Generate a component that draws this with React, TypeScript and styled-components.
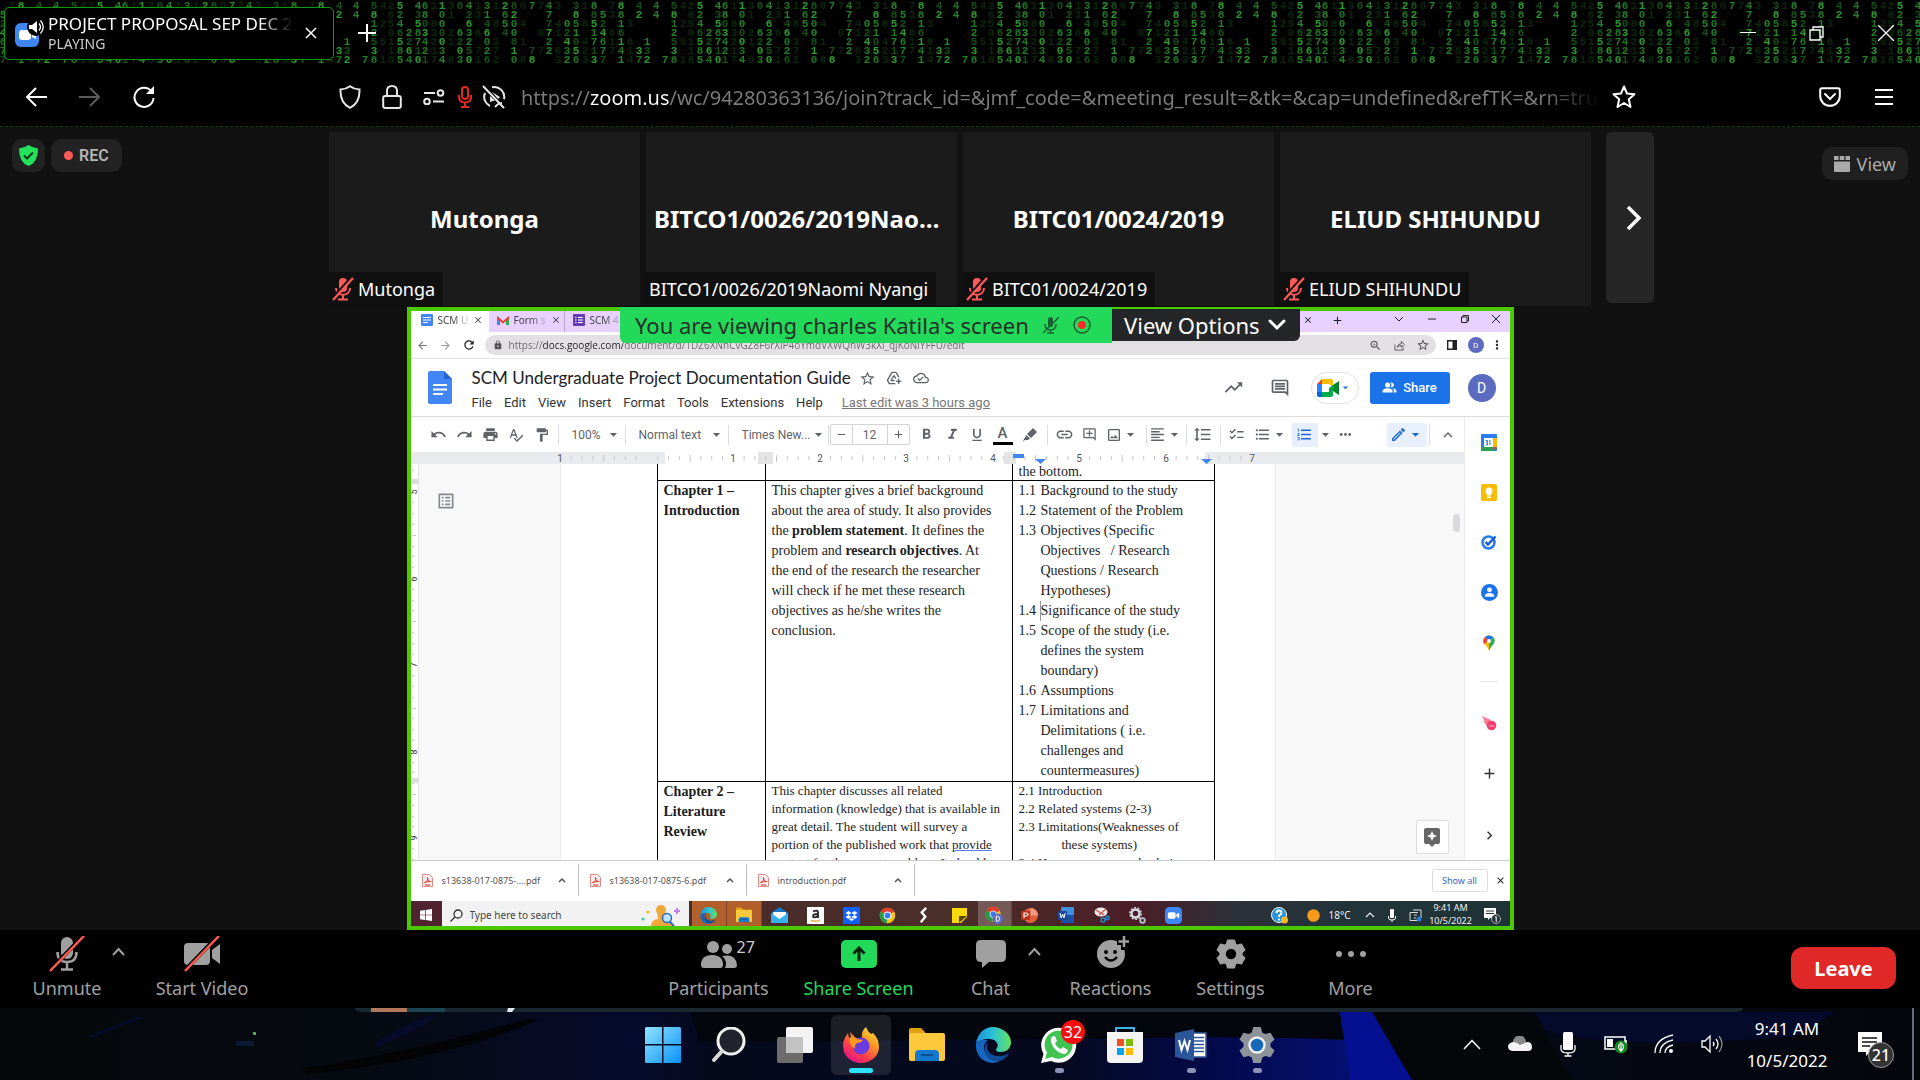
import React from "react";
import styled, { createGlobalStyle, css } from "styled-components";
import {
  MdUndo, MdRedo, MdPrint, MdSpellcheck, MdFormatPaint, MdFormatBold, MdFormatItalic,
  MdFormatUnderlined, MdInsertLink, MdOutlineAddComment,
  MdOutlineImage, MdFormatAlignLeft, MdFormatLineSpacing, MdChecklist,
  MdFormatListBulleted, MdFormatListNumbered, MdMoreHoriz, MdOutlineEdit,
  MdKeyboardArrowUp, MdArrowDropDown, MdTrendingUp, MdOutlineInsertComment,
  MdStarBorder, MdAddToDrive, MdOutlineCloudDone, MdPeopleAlt, MdZoomIn, MdLock,
  MdRefresh, MdArrowBack, MdArrowForward, MdClose, MdAdd, MdRemove, MdMoreVert,
  MdChevronRight, MdOutlineListAlt,
} from "react-icons/md";

const ui = `"Noto Sans", "Open Sans", sans-serif`;
const roboto = `Roboto, "Open Sans", sans-serif`;
const serif = `"Liberation Serif", "Times New Roman", serif`;

const GlobalStyle = createGlobalStyle`
  * { box-sizing: border-box; }
  html, body { margin: 0; background: #000; }
  button, input, select { font: inherit; color: inherit; }
  button { border: 0; background: none; padding: 0; margin: 0; cursor: pointer; }
  svg { display: block; flex: none; }
`;

const Desktop = styled.div`
  min-height: 100vh;
  display: flex;
  flex-direction: column;
  font-family: ${ui};
  color: #fff;
  overflow: hidden;
`;

/* ---------- Firefox chrome ---------- */

const TabStrip = styled.header`
  display: flex;
  align-items: center;
  height: 66px;
  padding-left: 4px;
  background: #000;
  position: relative;
  isolation: isolate;
`;
const RainCanvas = styled.svg`
  position: absolute;
  inset: 0;
  width: 100%;
  height: 100%;
  z-index: -1;
`;
const BrowserTab = styled.div`
  display: flex;
  align-items: center;
  width: 330px;
  height: 53px;
  padding: 0 8px 0 10px;
  gap: 4px;
  background: #000;
  border: 1px solid #0d9a0d;
  border-radius: 5px;
`;
const TabText = styled.div`
  flex: 1;
  min-width: 0;
  overflow: hidden;
  white-space: nowrap;
  mask-image: linear-gradient(90deg, #000 86%, transparent);
`;
const TabTitle = styled.div`
  font-size: 17px;
  line-height: 22px;
`;
const TabState = styled.div`
  font-size: 14px;
  line-height: 18px;
  color: #ccc;
`;
const IconButton = styled.button<{ $w?: number; $h?: number; $c?: string }>`
  display: flex;
  flex: none;
  align-items: center;
  justify-content: center;
  width: ${(p) => p.$w ?? 32}px;
  height: ${(p) => p.$h ?? 32}px;
  color: ${(p) => p.$c ?? "inherit"};
`;
const Grow = styled.div`
  flex: 1;
`;
const NavBar = styled.nav`
  display: flex;
  align-items: center;
  height: 61px;
  padding: 2px 9px 0;
  background: #000;
  border-bottom: 1px dashed #0a3d0a;
`;
const AddressField = styled.div`
  display: flex;
  flex: 1;
  align-items: center;
  min-width: 0;
  margin: 0 158px;
`;
const AddressInput = styled.input<{ $paint: string; $size: number }>`
  flex: 1;
  min-width: 0;
  border: 0;
  outline: 0;
  padding: 0;
  font-size: ${(p) => p.$size}px;
  color: transparent;
  background: ${(p) => p.$paint};
  background-clip: text;
  -webkit-background-clip: text;
`;
const AddressSlot = styled.div`
  display: flex;
  flex: 1;
  min-width: 0;
  padding: 0 3px 0 8px;
`;

/* ---------- Zoom meeting ---------- */

const Stage = styled.main`
  display: flex;
  flex-direction: column;
  flex: 1;
  align-items: center;
  gap: 1px;
  padding-top: 5px;
  background: #111;
`;
const TopRow = styled.div`
  display: grid;
  grid-template-columns: 1fr auto 1fr;
  width: 100%;
`;
const Badges = styled.div`
  display: flex;
  gap: 6px;
  padding: 7px 12px;
`;
const Badge = styled.div`
  display: flex;
  align-items: center;
  gap: 6px;
  height: 33px;
  padding: 0 7px;
  border-radius: 10px;
  background: #222;
`;
const RecBadge = styled(Badge)`
  padding: 0 13px;
  color: #b4b4b4;
  font: 600 16px ${roboto};
`;
const RecDot = styled.span`
  width: 9px;
  height: 9px;
  border-radius: 50%;
  background: #ff5a5a;
`;
const Tiles = styled.div`
  display: flex;
  gap: 6px;
`;
const Tile = styled.article`
  display: flex;
  flex-direction: column;
  align-items: flex-start;
  width: 311px;
  height: 174px;
  background: #1b1b1b;
`;
const TileName = styled.h2`
  width: 100%;
  height: 140px;
  margin: 0;
  padding: 70px 8px 0;
  text-align: center;
  font-size: 24px;
  line-height: 34px;
  font-weight: 700;
  overflow: hidden;
  white-space: nowrap;
  text-overflow: ellipsis;
`;
const TileLabel = styled.div`
  display: flex;
  align-items: center;
  gap: 4px;
  height: 34px;
  padding: 0 8px 0 3px;
  font-size: 18px;
  background: #101010;
`;
const StripSide = styled.div`
  display: flex;
  align-items: flex-start;
  justify-content: space-between;
  padding: 0 12px 0 15px;
`;
const NextButton = styled.button`
  display: flex;
  align-items: center;
  justify-content: center;
  width: 48px;
  height: 171px;
  padding-left: 8px;
  border-radius: 6px;
  background: #262626;
`;
const ViewButton = styled.button`
  display: flex;
  align-items: center;
  gap: 7px;
  height: 33px;
  margin-top: 15px;
  padding: 0 12px;
  border-radius: 10px;
  background: #202020;
  color: #aaa;
  font-size: 18px;
`;
const SharedScreen = styled.section`
  position: relative;
  display: flex;
  flex-direction: column;
  width: 1107px;
  height: 623px;
  border: 4px solid #4cc800;
  background: #fff;
  color: #222;
`;
const Banner = styled.div`
  position: absolute;
  z-index: 2;
  top: -4px;
  left: 50%;
  transform: translateX(-50%);
  display: flex;
  align-items: center;
  font-size: 22px;
  white-space: nowrap;
`;
const BannerInfo = styled.div`
  display: flex;
  align-items: center;
  gap: 13px;
  width: 492px;
  height: 36px;
  padding-left: 15px;
  border-bottom-left-radius: 6px;
  background: #23d959;
  color: #22302a;
`;
const BannerButton = styled.button`
  display: flex;
  align-items: center;
  gap: 8px;
  width: 188px;
  height: 32px;
  padding-left: 12px;
  border-bottom-right-radius: 6px;
  background: #242628;
  color: #fff;
`;
const MeetingBar = styled.footer`
  display: flex;
  align-items: center;
  justify-content: space-between;
  height: 78px;
  padding: 0 24px 2px 0;
  background: #000;
`;
const Group = styled.div`
  display: flex;
`;
const MeetingItem = styled.div<{ $w: number; $c?: string }>`
  position: relative;
  width: ${(p) => p.$w}px;
  color: ${(p) => p.$c ?? "#a0a0a0"};
`;
const MeetingButton = styled.button`
  display: flex;
  flex-direction: column;
  align-items: center;
  gap: 3px;
  width: 100%;
  font-size: 18px;
  line-height: 26px;
`;
const MeetingCaret = styled.button`
  position: absolute;
  top: 6px;
  right: 6px;
  width: 20px;
  height: 20px;
  display: grid;
  place-items: center;
`;
const Count = styled.span`
  position: absolute;
  top: 0;
  left: 86px;
  font-size: 16px;
  line-height: 22px;
  color: #ccc;
`;
const Leave = styled.button`
  width: 105px;
  height: 42px;
  border-radius: 12px;
  background: #e02828;
  font-size: 20px;
  font-weight: 700;
`;

/* ---------- Shared Chrome window ---------- */

const ChromeTabs = styled.div`
  display: flex;
  height: 21px;
  background: #e8d1ff;
  font: 10px ${ui};
`;
const ChromeTab = styled.div<{ $active?: boolean; $w: number }>`
  display: flex;
  align-items: center;
  gap: 5px;
  width: ${(p) => p.$w}px;
  padding: 0 6px 4px ${(p) => (p.$active ? 10 : 8)}px;
  color: #444;
  border-right: 1px solid ${(p) => (p.$active ? "#fff" : "#b9a6cf")};
  background: ${(p) => (p.$active ? "#fff" : "transparent")};
`;
const ChromeTabTitle = styled.span`
  flex: 1;
  white-space: nowrap;
  mask-image: linear-gradient(90deg, #000 50%, rgba(0, 0, 0, 0.2));
`;
const ChromeBar = styled.div`
  display: flex;
  align-items: center;
  height: 27px;
  border-bottom: 1px solid #e4e4e4;
  font: 10px "Open Sans", ${ui};
`;
const Omnibox = styled.div`
  display: flex;
  flex: 1;
  align-items: center;
  gap: 3px;
  height: 20px;
  margin: 0 4px 0 4px;
  padding: 0 1px 0 5px;
  border-radius: 10px;
  background: #e2e0e3;
`;
const OmniActions = styled.div`
  display: flex;
`;
const Avatar = styled.button<{ $s: number }>`
  flex: none;
  width: ${(p) => p.$s}px;
  height: ${(p) => p.$s}px;
  border-radius: 50%;
  background: #5c6bc0;
  color: #fff;
  font-family: ${roboto};
  font-size: ${(p) => p.$s / 2}px;
`;
const DocsHeader = styled.div`
  display: flex;
  align-items: center;
  height: 58px;
  padding: 0 14px 0 17px;
  border-bottom: 1px solid #dcdcdc;
  font-family: ${roboto};
`;
const DocsTitleBlock = styled.div`
  display: flex;
  flex: 1;
  flex-direction: column;
  padding: 7px 0 0 20px;
  height: 100%;
`;
const TitleRow = styled.div`
  display: flex;
  align-items: center;
  height: 24px;
  color: #5f6368;
`;
const DocTitle = styled.h1`
  margin: 0 3px 0 0;
  color: #202124;
  font: 400 17px/24px Lato, ${roboto};
`;
const MenuRow = styled.div`
  display: flex;
  height: 24px;
  align-items: center;
  gap: 12px;
  font-size: 13px;
  color: #333;
`;
const LastEdit = styled.a`
  margin-left: 7px;
  color: #777;
`;
const MeetPill = styled.button`
  display: flex;
  align-items: center;
  justify-content: center;
  width: 48px;
  height: 32px;
  margin: 0 11px 0 8px;
  border: 1px solid #e2e2e2;
  border-radius: 16px;
  color: #1a73e8;
`;
const ShareButton = styled.button`
  display: flex;
  align-items: center;
  justify-content: center;
  gap: 6px;
  width: 80px;
  height: 32px;
  margin-right: 18px;
  border-radius: 3px;
  background: #1a73e8;
  color: #fff;
  font-size: 13px;
  font-weight: 500;
`;
const DocsMain = styled.div`
  display: flex;
  flex: 1;
  min-height: 0;
`;
const Editor = styled.div`
  display: flex;
  flex: 1;
  flex-direction: column;
  min-width: 0;
`;
const Toolbar = styled.div`
  display: flex;
  align-items: center;
  height: 35px;
  padding-left: 15px;
  color: #5f6368;
  font: 12px ${roboto};
`;
const Sep = styled.span<{ $m?: number }>`
  flex: none;
  width: 1px;
  height: 20px;
  margin: 0 ${(p) => p.$m ?? 4}px;
  background: #dadce0;
`;
const Gap = styled.span<{ $w: number }>`
  flex: none;
  width: ${(p) => p.$w}px;
`;
const PanelRule = styled.hr`
  width: 18px;
  height: 1px;
  margin: 12px 0 16px;
  border: 0;
  background: #e8e8e8;
`;
const Picker = styled.label<{ $w: number }>`
  display: flex;
  align-items: center;
  width: ${(p) => p.$w}px;
  padding-left: 10px;
  select {
    flex: 1;
    min-width: 0;
    appearance: none;
    border: 0;
    padding: 0;
    background: none;
    outline: 0;
  }
`;
const SizeBox = styled.div`
  display: flex;
  height: 21px;
  width: 80px;
  margin-right: 4px;
  border: 1px solid #d4d4d4;
  border-radius: 2px;
  input {
    width: 36px;
    border: solid #d4d4d4;
    border-width: 0 1px;
    padding: 0;
    text-align: center;
  }
`;
const Lit = styled.div<{ $w: number }>`
  display: flex;
  align-items: center;
  justify-content: center;
  width: ${(p) => p.$w}px;
  height: 24px;
  border-radius: 2px;
  background: #e8f0fe;
  color: #1a67d2;
`;
const InkButton = styled(IconButton)`
  border-bottom: 3px solid #000;
  width: 20px;
  height: 20px;
  margin: 0 3px;
  font-weight: 500;
  font-size: 15px;
`;
const Sheet = styled.div`
  display: flex;
  flex: 1;
  min-height: 0;
  overflow: hidden;
  background: #f8f8f9;
`;
const Outline = styled.div`
  flex: none;
  width: 141px;
  padding: 27px 0 0 17px;
  color: #85888d;
`;
const Page = styled.div`
  flex: none;
  width: 716px;
  padding-left: 96px;
  background: #fff;
  border: solid #ececec;
  border-width: 0 1px;
`;
const Margin = styled.div`
  display: flex;
  flex: 1;
  flex-direction: column;
  align-items: flex-end;
  justify-content: space-between;
  padding: 50px 4px 6px 0;
`;
const Thumb = styled.div`
  width: 7px;
  height: 18px;
  border-radius: 4px;
  background: #dadade;
`;
const Explore = styled.button`
  display: grid;
  place-items: center;
  width: 33px;
  height: 34px;
  margin-right: 11px;
  border: 1px solid #ddd;
  border-radius: 2px;
  background: #fff;
`;
const Chapters = styled.table`
  width: 558px;
  table-layout: fixed;
  border-collapse: collapse;
  font: 14px/20px ${serif};
  color: #1c1c1c;
  td, th {
    padding: 0 0 0 6px;
    border: 1px solid #000;
    text-align: left;
    vertical-align: top;
    white-space: nowrap;
  }
  tr:first-child td {
    border-top: 0;
  }
`;
const TopLine = styled.div`
  line-height: 16px;
`;
const Compact = styled.div`
  font-size: 13px;
  line-height: 18px;
`;
const Entry = styled.div`
  display: grid;
  grid-template-columns: 22px 1fr;
  white-space: pre;
`;
const Hang = styled.div`
  padding-left: 43px;
`;
const Typo = styled.span`
  text-decoration: underline;
  text-decoration-color: #4a86e8;
`;
const Caret = styled.span`
  box-shadow: -1px 0 0 #999;
`;
const SidePanel = styled.aside`
  display: flex;
  flex-direction: column;
  align-items: center;
  width: 46px;
  padding: 0 0 9px 4px;
  border-left: 1px solid #ececec;
`;
const SideItem = styled.button<{ $h?: number }>`
  display: grid;
  place-items: center;
  width: 34px;
  height: ${(p) => p.$h ?? 50}px;
  color: #333;
`;
const Downloads = styled.div`
  display: flex;
  align-items: center;
  height: 41px;
  padding-bottom: 2px;
  border-top: 1px solid #ccc;
  font: 9px ${ui};
  color: #555;
`;
const DownloadItem = styled.div`
  display: flex;
  align-items: center;
  gap: 9px;
  width: 168px;
  height: 32px;
  padding: 0 8px 0 11px;
  border-right: 1px solid #bbb;
`;
const FileLink = styled.a`
  flex: 1;
  color: inherit;
  text-decoration: none;
  white-space: nowrap;
`;
const ShowAll = styled.button`
  width: 56px;
  height: 23px;
  margin-right: 4px;
  border: 1px solid #ddd;
  border-radius: 2px;
  color: #3367c9;
`;
const RemoteTaskbar = styled.div`
  display: flex;
  align-items: center;
  height: 25px;
  overflow: hidden;
  background: linear-gradient(90deg, #50222f 0, #4a2c2a 25%, #4a2e29 50%, #4b1d27 66%, #2c3038 75%, #22343a 85%, #1f3337);
  color: #f2f2f2;
  font: 10px ${ui};
`;
const RemoteSearch = styled.label`
  display: flex;
  align-items: center;
  gap: 7px;
  width: 247px;
  height: 25px;
  padding: 3px 8px 0 8px;
  background: #f2f2f2;
  color: #333;
  input {
    flex: 1;
    min-width: 0;
    border: 0;
    background: none;
    outline: 0;
    padding: 0;
  }
  input::placeholder { color: #444; }
`;
const RemoteApp = styled.button<{ $bg?: string; $w?: number }>`
  display: grid;
  place-items: center;
  width: ${(p) => p.$w ?? 36}px;
  height: 25px;
  padding-top: 3px;
  ${(p) => p.$bg && css`background: ${p.$bg}; border-right: 1px solid #7d4020;`}
`;
const Temperature = styled.span`
  width: 32px;
  padding-top: 3px;
`;
const RemoteClock = styled.div`
  width: 50px;
  text-align: center;
  font-size: 9px;
  line-height: 13px;
`;

/* ---------- Windows taskbar ---------- */

const Taskbar = styled.div`
  display: grid;
  grid-template-columns: 1fr auto 1fr;
  align-items: center;
  position: relative;
  isolation: isolate;
  height: 72px;
  background: #04070c;
`;
const Wallpaper = styled.svg`
  position: absolute;
  inset: 0;
  width: 100%;
  height: 100%;
  z-index: -1;
`;
const Apps = styled.div`
  display: flex;
  padding-top: 2px;
`;
const App_ = styled.button<{ $active?: boolean }>`
  display: flex;
  flex-direction: column;
  align-items: center;
  justify-content: space-between;
  position: relative;
  width: 60px;
  height: 60px;
  margin: 0 3px;
  padding: 12px 0 2px;
  border-radius: 6px;
  background: ${(p) => (p.$active ? "rgba(255,255,255,0.1)" : "none")};
`;
const Running = styled.span<{ $on?: boolean; $active?: boolean }>`
  width: ${(p) => (p.$active ? 24 : 9)}px;
  height: 5px;
  border-radius: 3px;
  background: ${(p) => (p.$active ? "#2ee3ff" : p.$on ? "#8d93b4" : "transparent")};
`;
const Unread = styled.span`
  position: absolute;
  top: 5px;
  right: 4px;
  width: 24px;
  height: 24px;
  border-radius: 50%;
  background: #f70d0d;
  font-size: 16px;
  line-height: 24px;
`;
const Tray = styled.div`
  display: flex;
  align-items: center;
  justify-content: flex-end;
  height: 100%;
`;
const Clock = styled.div`
  width: 102px;
  padding-top: 2px;
  text-align: center;
  font-size: 17px;
  line-height: 32px;
`;
const Notice = styled.button`
  position: relative;
  display: grid;
  place-items: center;
  width: 64px;
  height: 48px;
`;
const NoticeCount = styled.span`
  position: absolute;
  left: 30px;
  top: 22px;
  width: 26px;
  height: 26px;
  border: 1px solid #999;
  border-radius: 50%;
  background: #333;
  font-size: 16px;
  line-height: 24px;
  font-weight: 500;
`;
const PeekLine = styled.span`
  align-self: stretch;
  width: 2px;
  margin: 0 6px 0 10px;
  background: #666c78;
`;

/* ---------- Drawings ---------- */

const rain: [number, string][] = [
  [20, "5246585"], [29, "   2264"], [38, "4358710"], [45, "6803421"], [62, "1000034"],
  [80, "0  6203"], [89, "4263250"], [107, "3146026"], [125, "2654   "], [134, "8200810"],
  [152, "7    78"], [169, "477722 "], [187, "  02432"], [196, "3851056"], [214, "8851713"],
  [223, " 524677"], [241, "8816141"], [259, "42   37"], [267, "    132"], [276, "44     "],
  [285, "      7"], [294, "5812538"],
];
const faint: [number, string][] = [
  [11, "2650118"], [54, "1 83217"], [71, "31 21 8"], [98, "13 6 71"], [116, "1 8 372"],
  [143, "0 4 1 8"], [161, "7  0 7 "], [178, "3 41 63"], [205, "1 8 423"], [232, "73 817 "],
  [250, "  3 614"], [3, "4 2 5 1"],
];
const shades = ["#2c9a2e", "#1c7522", "#237f28", "#154f18"];
const Rain = () => (
  <RainCanvas aria-hidden="true">
    <defs>
      <pattern id="rain" x="80" width="300" height="66" patternUnits="userSpaceOnUse">
        <g fontFamily="Liberation Mono, monospace" fontSize="11" fontWeight="700" textAnchor="middle">
          {rain.map(([x, s], i) =>
            s.split("").map((c, r) => (
              <text key={`${x}-${r}`} x={x} y={9 + r * 9} fill={shades[(i * 3 + r * 5) % 4]}>{c}</text>
            )),
          )}
          {faint.map(([x, s]) =>
            s.split("").map((c, r) => (
              <text key={`${x}-${r}`} x={x} y={9 + r * 9} fill="#0a260b">{c}</text>
            )),
          )}
        </g>
      </pattern>
    </defs>
    <rect width="100%" height="66" fill="url(#rain)" />
  </RainCanvas>
);

type P = { children: React.ReactNode; s?: number; w?: number; h?: number; box?: string; fill?: string; stroke?: string; sw?: number };
const Svg = ({ children, s = 24, w, h, box = "0 0 24 24", fill = "none", stroke, sw }: P) => (
  <svg width={w ?? s} height={h ?? s} viewBox={box} fill={fill} stroke={stroke} strokeWidth={sw} aria-hidden="true">
    {children}
  </svg>
);
const Line = (p: P) => <Svg stroke="currentColor" sw={2} {...p} />;

const MutedMic = () => (
  <Svg w={22} h={24} box="0 0 22 24">
    <rect x="7" y="1" width="8" height="14" rx="4" fill="#ff5a5a" />
    <path d="M4 11c0 9 14 9 14 0M11 18v4M6 22.500h10" stroke="#ff5a5a" strokeWidth="2" />
    <path d="M0 22L20 0" stroke="#101010" strokeWidth="3" />
    <path d="M1 23L21 1" stroke="#ff5a5a" strokeWidth="2.200" />
  </Svg>
);
const ZoomLogo = ({ s = 24 }: { s?: number }) => (
  <Svg s={s}>
    <rect width="24" height="24" rx="6" fill="#3f86f5" />
    <rect x="4" y="7.500" width="11" height="9" rx="2.500" fill="#fff" />
    <path d="M16 10.500l4-2.500v8l-4-2.500z" fill="#fff" />
  </Svg>
);
const ChromeLogo = ({ s = 16 }: { s?: number }) => (
  <Svg s={s}>
    <circle cx="12" cy="12" r="11" fill="#fbc116" />
    <path d="M12 12L2.500 6.500A11 11 0 0121.500 6.500z" fill="#e33b2e" />
    <path d="M12 12L2.500 6.500A11 11 0 0011 23z" fill="#229a48" />
    <circle cx="12" cy="12" r="5.500" fill="#fff" />
    <circle cx="12" cy="12" r="4.200" fill="#3b7ded" />
  </Svg>
);
const EdgeLogo = ({ s = 36 }: { s?: number }) => (
  <Svg s={s} box="0 0 36 36">
    <defs>
      <linearGradient id={`edge${s}`} x1="0" x2="1"><stop stopColor="#1d8fe0" /><stop offset=".5" stopColor="#2cc3d6" /><stop offset="1" stopColor="#63e05a" /></linearGradient>
    </defs>
    <path d="M1 17C2 7 9 0 18 0s18 7 18 15c0 6-4 10-10 10-5 0-6-2-4-4 2-3 0-9-8-9C8 12 3 14 1 17z" fill={`url(#edge${s})`} />
    <path d="M1 17c3-4 8-5 12-4-4 3-5 7-3 12 2 6 9 10 16 8-3 2-6 3-9 3C7 35 0 27 1 17z" fill="#1767c0" />
    <path d="M13 15c-3 5 0 15 12 14 4 0 7-2 9-3-2 5-8 9-14 8-11-2-13-14-7-19z" fill="#0f4c97" />
  </Svg>
);
const WordLogo = ({ w = 36, h = 38 }: { w?: number; h?: number }) => (
  <Svg w={w} h={h} box="0 0 32 32">
    <path d="M17 4h14v24H17z" fill="#fff" stroke="#2b579a" strokeWidth="1.500" />
    <path d="M19 8.500h10M19 12h10M19 15.500h10M19 19h10M19 22.500h10" stroke="#2b579a" strokeWidth="1.600" />
    <path d="M0 4l19-4v32L0 28z" fill="#2b579a" />
    <path d="M4 11l2.500 10L9.500 12l3 9L15 11" stroke="#fff" strokeWidth="2" />
  </Svg>
);
const Folder = ({ s = 36 }: { s?: number }) => (
  <Svg s={s} box="0 0 36 36">
    <path d="M0 3q0-2 2-2h10l4 4v6H0z" fill="#e0a010" />
    <rect y="6" width="36" height="28" rx="2" fill="#fdc93c" />
    <path d="M6 34V27q0-4 4-4h16q4 0 4 4v7z" fill="#1379d0" />
    <path d="M12 28h12" stroke="#0a4f94" strokeWidth="2" />
  </Svg>
);
const Gear = ({ s, c, inner }: { s: number; c: string; inner: React.ReactNode }) => (
  <Svg s={s}>
    <path fill={c} fillRule="evenodd" d="M9.500 0h5l1 3.600 2 1.100L21 3.800l2.700 4.500-2.700 2.600v2.200l2.700 2.600L21 20.200l-3.500-.9-2 1.100-1 3.600h-5l-1-3.600-2-1.100-3.500.9L.3 15.700 3 13.100v-2.200L.3 8.300 3 3.800l3.500.9 2-1.100zM12 7.500a4.500 4.500 0 100 9 4.500 4.500 0 000-9z" />
    {inner}
  </Svg>
);
const Pdf = () => (
  <Svg w={11} h={13} box="0 0 11 13">
    <path d="M.5.500h7l3 3v9H.5z" fill="#fdeceb" stroke="#e08a86" />
    <path d="M2.500 8.500c3-1 3.500-3 3-5 0 3 1.500 4 3.500 4-2.500 0-4 .3-6.500 1z" stroke="#d33a2f" />
    <path d="M3 11h5" stroke="#b33" />
  </Svg>
);
const Down = () => <MdArrowDropDown size={17} />;

const ticks = Array.from({ length: 64 }, (_, i) => i);
const HRuler = () => (
  <svg width="100%" height="12" aria-hidden="true">
    <rect width="100%" height="12" fill="#e9eaee" />
    <rect x="254" width="540" height="12" fill="#fff" />
    <rect x="347" width="15" height="12" fill="#e4e4e4" />
    <rect x="593" width="12" height="12" fill="#e4e4e4" />
    {ticks.map((i) => {
      const x = 149 + i * 10.8;
      return i % 8 === 0 || x > 860 ? null : <rect key={i} x={x} y={i % 4 === 0 ? 3 : 4} width="1" height={i % 4 === 0 ? 7 : 4} fill="#c4c6ca" />;
    })}
    <g fontFamily="Roboto, sans-serif" fontSize="10" fill="#555" textAnchor="middle">
      {["1", "", "1", "2", "3", "4", "5", "6", "7"].map((n, i) => (
        <text key={i} x={149 + Math.round(i * 86.5)} y="10">{n}</text>
      ))}
    </g>
    <rect x="602" y="2" width="11" height="4" fill="#4285f4" />
    <path d="M624 7h11l-5.500 5zM790 7h11l-5.500 5z" fill="#4285f4" />
  </svg>
);
const VRuler = () => (
  <svg width="8" height="396" aria-hidden="true">
    <rect width="8" height="396" fill="#fff" />
    <rect y="15" width="8" height="5" fill="#ddd" />
    <rect y="314" width="8" height="5" fill="#ddd" />
    {Array.from({ length: 37 }, (_, i) => (
      <rect key={i} x="1" y={6 + Math.round(i * 10.8)} width={i % 4 === 2 ? 4 : 2} height="1" fill="#c8c8c8" />
    ))}
    <rect x="7" width="1" height="396" fill="#e2e2e2" />
    <g fontFamily="Roboto, sans-serif" fontSize="9" fill="#444" textAnchor="middle">
      {["5", "6", "7", "8", "9"].map((n, i) => {
        const y = 28 + Math.round(i * 86.5);
        return <text key={n} x="3" y={y} transform={`rotate(-90 3 ${y})`} dy="3">{n}</text>;
      })}
    </g>
  </svg>
);

const people = [
  { name: "Mutonga", muted: true },
  { name: "BITCO1/0026/2019Naomi Nyangi", muted: false },
  { name: "BITC01/0024/2019", muted: true },
  { name: "ELIUD SHIHUNDU", muted: true },
];

const FirefoxChrome = () => (
  <>
    <TabStrip>
      <Rain />
      <BrowserTab>
        <Svg w={29} h={28} box="0 0 29 28">
          <rect x="0" y="4" width="24" height="24" rx="6" fill="#3f86f5" />
          <rect x="4" y="11" width="12" height="10" rx="3" fill="#fff" />
          <path d="M17 14l4-2v8l-4-2z" fill="#fff" />
          <circle cx="21" cy="8" r="9" fill="#000" />
          <path d="M14 6h3l5-4v12l-5-4h-3z" fill="#fff" />
          <path d="M24 4.500q3 3.500 0 7M25.500 1.500q5.500 6.500 0 13" stroke="#fff" strokeWidth="1.300" />
        </Svg>
        <TabText>
          <TabTitle>PROJECT PROPOSAL SEP DEC 2022</TabTitle>
          <TabState>PLAYING</TabState>
        </TabText>
        <IconButton $w={28} aria-label="Close tab">
          <Line s={12} box="0 0 12 12" sw={1.500}><path d="M1 1l10 10M11 1L1 11" /></Line>
        </IconButton>
      </BrowserTab>
      <IconButton $w={66} aria-label="New tab">
        <Line s={18} box="0 0 18 18"><path d="M9 0v18M0 9h18" /></Line>
      </IconButton>
      <Grow />
      <IconButton $w={69} aria-label="Minimize"><Line s={16} box="0 0 16 16" sw={1}><path d="M0 7.500h16" /></Line></IconButton>
      <IconButton $w={69} aria-label="Restore">
        <Line s={15} box="0 0 15 15" sw={1.300}><path d="M1 4h10v10H1zM4 4V1h10v10h-3" /></Line>
      </IconButton>
      <IconButton $w={69} aria-label="Close"><Line s={16} box="0 0 16 16" sw={1.300}><path d="M0 0l16 16M16 0L0 16" /></Line></IconButton>
    </TabStrip>
    <NavBar>
      <IconButton $w={54} aria-label="Back"><Line s={22} box="0 0 22 22"><path d="M11 2L2 11l9 9M2 11h20" /></Line></IconButton>
      <IconButton $w={54} $c="#5c5c5c" aria-label="Forward"><Line s={22} box="0 0 22 22"><path d="M11 2l9 9-9 9M20 11H0" /></Line></IconButton>
      <IconButton $w={54} aria-label="Reload">
        <Line s={22} box="0 0 22 22"><path d="M18.500 5.500A9.500 9.500 0 1020.500 12" /><path d="M21 0v8h-8z" fill="currentColor" stroke="none" /></Line>
      </IconButton>
      <AddressField>
        <IconButton $w={42} $c="#e6e6e6" aria-label="Tracking protection">
          <Line w={22} h={24} box="0 0 22 24"><path d="M11 1.200q4 3 9.500 3.300Q21 18 11 22.800 1 18 1.500 4.500 7 4.200 11 1.200z" /></Line>
        </IconButton>
        <IconButton $w={42} $c="#e6e6e6" aria-label="Connection secure">
          <Line w={20} h={24} box="0 0 20 24"><rect x="1.200" y="11" width="17.600" height="12" rx="2" /><path d="M5 11V6q0-5 5-5t5 5v5" /></Line>
        </IconButton>
        <IconButton $w={42} $c="#e6e6e6" aria-label="Permissions">
          <Line w={22} h={16} box="0 0 22 16"><path d="M1 4h11M10 12.500h11" /><circle cx="17.500" cy="4" r="2.800" /><circle cx="4" cy="12.500" r="2.800" /></Line>
        </IconButton>
        <IconButton $w={20} $c="#e22b20" aria-label="Microphone in use">
          <Line w={14} h={22} box="0 0 14 22"><rect x="4" y="1" width="6" height="12" rx="3" /><path d="M1 9v2q0 5.500 6 5.500t6-5.500V9M7 16v5M3 21h8" /></Line>
        </IconButton>
        <IconButton $w={38} $c="#e6e6e6" aria-label="Autoplay blocked">
          <Line s={24}><path d="M10 2.200a10 10 0 0112 12M20 18A10 10 0 0013 22M8 21A10 10 0 013 8M1 1l21 22" /><path d="M10 7l8 5-2 2zM8 11v6l5-1.500z" fill="currentColor" stroke="none" /></Line>
        </IconButton>
        <AddressSlot>
          <AddressInput
            aria-label="Address"
            $size={20}
            $paint="linear-gradient(90deg, #7c7c7c 69px, #fff 69px, #fff 149px, #7c7c7c 149px, #7c7c7c calc(100% - 60px), transparent)"
            defaultValue="https://zoom.us/wc/94280363136/join?track_id=&jmf_code=&meeting_result=&tk=&cap=undefined&refTK=&rn=true"
          />
        </AddressSlot>
        <IconButton $w={42} aria-label="Bookmark this page">
          <Line s={24}><path strokeLinejoin="round" d="M12 1.500l3 7 7.500.7-5.700 5 1.700 7.800-6.500-4-6.500 4 1.700-7.800-5.700-5 7.500-.7z" /></Line>
        </IconButton>
      </AddressField>
      <IconButton $w={54} aria-label="Save to Pocket">
        <Line w={22} h={20} box="0 0 22 20"><path d="M3 1.200h16q1.800 0 1.800 2V9a9.800 9.800 0 01-19.600 0V3.200q0-2 1.800-2z" /><path d="M6 7l5 5 5-5" strokeLinecap="round" /></Line>
      </IconButton>
      <IconButton $w={54} aria-label="Menu"><Line w={18} h={16} box="0 0 18 16"><path d="M0 1h18M0 8h18M0 15h18" /></Line></IconButton>
    </NavBar>
  </>
);

const DocsToolbar = () => (
  <Toolbar>
    <IconButton $w={26} aria-label="Undo"><MdUndo size={17} /></IconButton>
    <IconButton $w={26} aria-label="Redo"><MdRedo size={17} /></IconButton>
    <IconButton $w={26} aria-label="Print"><MdPrint size={17} /></IconButton>
    <IconButton $w={25} aria-label="Spelling"><MdSpellcheck size={16} /></IconButton>
    <IconButton $w={26} aria-label="Paint format"><MdFormatPaint size={16} /></IconButton>
    <Sep $m={3} />
    <Picker $w={60}><select aria-label="Zoom"><option>100%</option></select><Down /></Picker>
    <Sep $m={3} />
    <Picker $w={96}><select aria-label="Style"><option>Normal text</option></select><Down /></Picker>
    <Sep $m={3} />
    <Picker $w={95}><select aria-label="Font"><option>Times New...</option></select><Down /></Picker>
    <Sep $m={1} />
    <SizeBox>
      <IconButton $w={21} $h={19} aria-label="Smaller"><MdRemove size={13} /></IconButton>
      <input aria-label="Font size" defaultValue="12" />
      <IconButton $w={21} $h={19} aria-label="Larger"><MdAdd size={13} /></IconButton>
    </SizeBox>
    <IconButton $w={26} aria-label="Bold"><MdFormatBold size={17} /></IconButton>
    <IconButton $w={25} aria-label="Italic"><MdFormatItalic size={17} /></IconButton>
    <IconButton $w={25} aria-label="Underline"><MdFormatUnderlined size={16} /></IconButton>
    <InkButton aria-label="Text color">A</InkButton>
    <IconButton $w={28} aria-label="Highlight">
      <Svg s={14} box="0 0 14 14" fill="currentColor"><path d="M10 0l4 4-6 6-4-4zM3.500 7L7 10.500 5 12H2L0 13.500 1 11z" /></Svg>
    </IconButton>
    <Sep $m={3} />
    <IconButton $w={28} aria-label="Link"><MdInsertLink size={19} /></IconButton>
    <IconButton $w={22} aria-label="Comment"><MdOutlineAddComment size={15} /></IconButton>
    <IconButton $w={44} aria-label="Image"><MdOutlineImage size={16} /><Down /></IconButton>
    <Sep $m={1} />
    <IconButton $w={37} aria-label="Align"><MdFormatAlignLeft size={17} /><Down /></IconButton>
    <Sep $m={1} />
    <IconButton $w={30} aria-label="Line spacing"><MdFormatLineSpacing size={19} /></IconButton>
    <Sep $m={2} />
    <IconButton $w={27} aria-label="Checklist"><MdChecklist size={17} /></IconButton>
    <IconButton $w={42} aria-label="Bulleted list"><MdFormatListBulleted size={17} /><Down /></IconButton>
    <Lit $w={26}><IconButton $w={26} $h={24} aria-label="Numbered list"><MdFormatListNumbered size={17} /></IconButton></Lit>
    <IconButton $w={15} aria-label="List options"><Down /></IconButton>
    <IconButton $w={26} aria-label="More"><MdMoreHoriz size={17} /></IconButton>
    <Grow />
    <Lit $w={40}><MdOutlineEdit size={17} /><Down /></Lit>
    <Sep $m={2} />
    <IconButton $w={32} aria-label="Hide menus"><MdKeyboardArrowUp size={18} /></IconButton>
  </Toolbar>
);

const Docs = () => (
  <>
    <DocsHeader>
      <Svg w={24} h={33} box="0 0 24 33">
        <path d="M2 0h14l8 8v23q0 2-2 2H2q-2 0-2-2V2q0-2 2-2z" fill="#4285f4" />
        <path d="M16 0l8 8h-8z" fill="#1f63d6" />
        <path d="M5 14h14M5 18.500h14M5 23h10" stroke="#fff" strokeWidth="2" />
      </Svg>
      <DocsTitleBlock>
        <TitleRow>
          <DocTitle>SCM Undergraduate Project Documentation Guide</DocTitle>
          <IconButton $w={27} $h={20} aria-label="Star"><MdStarBorder size={17} /></IconButton>
          <IconButton $w={26} $h={20} aria-label="Add to Drive"><MdAddToDrive size={16} /></IconButton>
          <IconButton $w={28} $h={20} aria-label="Saved"><MdOutlineCloudDone size={16} /></IconButton>
        </TitleRow>
        <MenuRow>
          {["File", "Edit", "View", "Insert", "Format", "Tools", "Extensions", "Help"].map((m) => (
            <button key={m}>{m}</button>
          ))}
          <LastEdit href="#history">Last edit was 3 hours ago</LastEdit>
        </MenuRow>
      </DocsTitleBlock>
      <IconButton $w={46} $c="#5f6368" aria-label="Activity"><MdTrendingUp size={21} /></IconButton>
      <IconButton $w={46} $c="#5f6368" aria-label="Comments"><MdOutlineInsertComment size={20} /></IconButton>
      <MeetPill aria-label="Meet">
        <Svg w={22} h={18} box="0 0 22 18">
          <path d="M0 5l5-5v5z" fill="#ea4335" /><path d="M5 0h9q2 0 2 2v6l-4-3H5z" fill="#fbbc04" />
          <path d="M0 5h5v8H0z" fill="#2684fc" /><path d="M0 13h5v5H2q-2 0-2-2z" fill="#0066da" />
          <path d="M5 13h7V9l4-3v10q0 2-2 2H5z" fill="#00ac47" /><path d="M16 6l6-4v14l-6-4z" fill="#00832d" />
        </Svg>
        <MdArrowDropDown size={13} />
      </MeetPill>
      <ShareButton><MdPeopleAlt size={15} />Share</ShareButton>
      <Avatar $s={28}>D</Avatar>
    </DocsHeader>
    <DocsMain>
      <Editor>
        <DocsToolbar />
        <HRuler />
        <Sheet>
          <VRuler />
          <Outline><MdOutlineListAlt size={20} /></Outline>
          <Page>
            <Chapters>
              <colgroup><col width="108" /><col width="247" /><col width="202" /></colgroup>
              <tbody>
                <tr><td /><td /><td><TopLine>the bottom.</TopLine></td></tr>
                <tr>
                  <th scope="row">Chapter 1 –<br />Introduction</th>
                  <td>
                    This chapter gives a brief background<br />about the area of study. It also provides<br />
                    the <b>problem statement</b>. It defines the<br />problem and <b>research objectives</b>. At<br />
                    the end of the research the researcher<br />will check if he met these research<br />
                    objectives as he/she writes the<br />conclusion.
                  </td>
                  <td>
                    <Entry><span>1.1</span><span>Background to the study</span></Entry>
                    <Entry><span>1.2</span><span>Statement of the Problem</span></Entry>
                    <Entry><span>1.3</span><span>{"Objectives (Specific\nObjectives   / Research\nQuestions / Research\nHypotheses)"}</span></Entry>
                    <Entry><span>1.4</span><Caret>Significance of the study</Caret></Entry>
                    <Entry><span>1.5</span><span>{"Scope of the study (i.e.\ndefines the system\nboundary)"}</span></Entry>
                    <Entry><span>1.6</span><span>Assumptions</span></Entry>
                    <Entry><span>1.7</span><span>{"Limitations and\nDelimitations ( i.e.\nchallenges and\ncountermeasures)"}</span></Entry>
                  </td>
                </tr>
                <tr>
                  <th scope="row">Chapter 2 –<br />Literature<br />Review</th>
                  <td>
                    <Compact>
                      This chapter discusses all related<br />information (knowledge) that is available in<br />
                      great detail. The student will survey a<br />portion of the published work that <Typo>provide</Typo><br />
                      context for the current problem. It should
                    </Compact>
                  </td>
                  <td>
                    <Compact>
                      2.1 Introduction<br />2.2 Related systems (2-3)<br />2.3 Limitations(Weaknesses of
                      <Hang>these systems)</Hang>
                      2.4 How your proposed solution
                    </Compact>
                  </td>
                </tr>
              </tbody>
            </Chapters>
          </Page>
          <Margin>
            <Thumb />
            <Explore aria-label="Explore">
              <Svg w={16} h={19} box="0 0 16 19"><path d="M2 0h12q2 0 2 2v12q0 2-2 2h-3l-3 3-3-3H2q-2 0-2-2V2q0-2 2-2z" fill="#666" /><path d="M8 3l1.500 3.500L13 8 9.500 9.500 8 13 6.500 9.500 3 8l3.500-1.500z" fill="#fff" /></Svg>
            </Explore>
          </Margin>
        </Sheet>
      </Editor>
      <SidePanel>
        <SideItem aria-label="Calendar">
          <Svg w={16} h={17} box="0 0 16 17"><rect width="16" height="17" rx="1" fill="#2a7bef" /><path d="M12 4h4v9h-4z" fill="#fbbc04" /><path d="M0 13h12v4H0z" fill="#2e9e4f" /><path d="M12 13h4l-4 4z" fill="#ea4335" /><path d="M3 4h9v9H3z" fill="#fff" /><path d="M4.500 6.500h2v2h-1 1v2.500h-2M9 11V6.500L8 7" stroke="#2a7bef" /></Svg>
        </SideItem>
        <SideItem aria-label="Keep">
          <Svg w={16} h={17} box="0 0 16 17"><rect width="16" height="17" rx="1.500" fill="#fbbc04" /><circle cx="8" cy="7" r="3.500" fill="#fff" /><path d="M6 9h4v2.500H6zM6 12.500h4V14H6z" fill="#fff" /></Svg>
        </SideItem>
        <SideItem aria-label="Tasks">
          <Svg s={16} box="0 0 16 16"><circle cx="7.500" cy="8.500" r="6" stroke="#2a7bef" strokeWidth="2.500" /><path d="M4.500 8l2.500 2.500L14.500 2.500" stroke="#1a5fd0" strokeWidth="2.500" /></Svg>
        </SideItem>
        <SideItem aria-label="Contacts">
          <Svg s={17} box="0 0 16 16"><circle cx="8" cy="8" r="8" fill="#1a73e8" /><circle cx="8" cy="5.500" r="2.300" fill="#fff" /><path d="M3.500 12q0-3.500 4.500-3.500t4.500 3.500z" fill="#fff" /></Svg>
        </SideItem>
        <SideItem $h={52} aria-label="Maps">
          <Svg w={12} h={16} box="0 0 12 16"><path d="M6 16Q5 12 1.500 9A6 6 0 016 0z" fill="#fbbc04" /><path d="M6 16q1-4 4.500-7A6 6 0 006 6z" fill="#34a853" /><path d="M1 9A6 6 0 012 2l4 4z" fill="#ea4335" /><path d="M2 2a6 6 0 018.500.500L6 6z" fill="#1a73e8" /><path d="M10.500 2.500q2.500 3 0 6.500L6 14V6z" fill="#34a853" /><circle cx="6" cy="6" r="2" fill="#fff" /></Svg>
        </SideItem>
        <PanelRule />
        <SideItem aria-label="Add-on">
          <Svg s={15} box="0 0 15 15"><path d="M0 0l9 4-4 6zM1 5l5 2-1 3z" fill="#ff7a96" /><circle cx="9.500" cy="9.500" r="4.800" fill="#f4416b" /><path d="M7.500 11V9l1.200 1.200L10 9v2M11.500 9v2" stroke="#ffc0cf" strokeWidth=".7" /></Svg>
        </SideItem>
        <SideItem aria-label="Get add-ons"><MdAdd size={17} /></SideItem>
        <Grow />
        <SideItem $h={32} aria-label="Hide side panel"><MdChevronRight size={17} /></SideItem>
      </SidePanel>
    </DocsMain>
  </>
);

const RemoteDesktop = () => (
  <SharedScreen>
    <Banner>
      <BannerInfo>
        <span>You are viewing charles Katila's screen</span>
        <Svg s={18} box="0 0 18 18"><rect x="6" y="1" width="5" height="10" rx="2.500" fill="#17602f" /><path d="M3 8q0 6 5.500 6T14 8M8.500 14v3M5 17h7" stroke="#17602f" strokeWidth="1.500" /><path d="M1 17L17 1" stroke="#17602f" strokeWidth="1.500" /></Svg>
        <Svg s={18} box="0 0 18 18"><circle cx="9" cy="9" r="8" stroke="#17602f" strokeWidth="1.500" /><circle cx="9" cy="9" r="4" fill="#ff2b2b" /></Svg>
      </BannerInfo>
      <BannerButton>View Options<Line w={18} h={12} box="0 0 18 12" sw={3}><path d="M2 2l7 7 7-7" strokeLinecap="round" /></Line></BannerButton>
    </Banner>
    <ChromeTabs>
      <ChromeTab $active $w={78}>
        <Svg w={12} h={12} box="0 0 12 12"><rect width="12" height="12" rx="1" fill="#4285f4" /><path d="M2 3.500h8M2 6h8M2 8.500h5" stroke="#fff" /></Svg>
        <ChromeTabTitle>SCM U</ChromeTabTitle><MdClose size={10} />
      </ChromeTab>
      <ChromeTab $w={76}>
        <Svg w={12} h={10} box="0 0 12 10"><path d="M0 1v9h3V4z" fill="#4285f4" /><path d="M12 1v9H9V4z" fill="#34a853" /><path d="M0 1l6 5 6-5v3L6 8.500 0 4z" fill="#ea4335" /></Svg>
        <ChromeTabTitle>Form s</ChromeTabTitle><MdClose size={10} />
      </ChromeTab>
      <ChromeTab $w={60}>
        <Svg w={12} h={12} box="0 0 12 12"><rect width="12" height="12" rx="1" fill="#673ab7" /><path d="M2 3.500h1.500M5 3.500h5M2 6h1.500M5 6h5M2 8.500h1.500M5 8.500h5" stroke="#fff" /></Svg>
        <ChromeTabTitle>SCM 4</ChromeTabTitle>
      </ChromeTab>
      <Grow />
      <IconButton $w={26} $h={18} aria-label="Close tab"><MdClose size={10} /></IconButton>
      <Sep $m={0} />
      <IconButton $w={32} $h={18} aria-label="New tab"><MdAdd size={13} /></IconButton>
      <Gap $w={29} />
      <IconButton $w={33} $h={16} aria-label="Search tabs"><Line s={8} box="0 0 8 8" sw={1}><path d="M0 2l4 4 4-4" /></Line></IconButton>
      <IconButton $w={33} $h={16} aria-label="Minimize"><Line s={8} box="0 0 8 8" sw={1}><path d="M0 4h8" /></Line></IconButton>
      <IconButton $w={33} $h={16} aria-label="Restore"><Line s={8} box="0 0 8 8" sw={1}><path d="M.5 2h5.500v5.500H.5zM2 2V.5h5.500V6H6" /></Line></IconButton>
      <IconButton $w={28} $h={16} aria-label="Close"><Line s={8} box="0 0 8 8" sw={1}><path d="M0 0l8 8M8 0L0 8" /></Line></IconButton>
    </ChromeTabs>
    <ChromeBar>
      <IconButton $w={23} $h={20} $c="#777" aria-label="Back"><MdArrowBack size={13} /></IconButton>
      <IconButton $w={24} $h={20} $c="#999" aria-label="Forward"><MdArrowForward size={13} /></IconButton>
      <IconButton $w={23} $h={20} aria-label="Reload"><MdRefresh size={14} /></IconButton>
      <Omnibox>
        <IconButton $w={16} $h={18} $c="#555" aria-label="Site information"><MdLock size={10} /></IconButton>
        <AddressInput
          aria-label="Shared address"
          $size={10}
          $paint="linear-gradient(90deg, #666 34px, #222 34px, #222 114px, #666 114px)"
          defaultValue="https://docs.google.com/document/d/1DZ6XNhCvGZ8F6rXlP4oYmdVXWQhW3kXl_qjKoNiYFFU/edit"
        />
        <OmniActions>
          <IconButton $w={24} $h={18} $c="#555" aria-label="Zoom"><MdZoomIn size={13} /></IconButton>
          <IconButton $w={23} $h={18} $c="#555" aria-label="Share page">
            <Line s={11} box="0 0 12 12" sw={1}><path d="M1 5v6h9V8M3.500 8Q4 4 8 4V1.500L11.500 5 8 8V6Q5 6 3.500 8z" /></Line>
          </IconButton>
          <IconButton $w={24} $h={18} $c="#555" aria-label="Bookmark"><MdStarBorder size={14} /></IconButton>
        </OmniActions>
      </Omnibox>
      <IconButton $w={24} $h={20} aria-label="Side panel"><Svg s={10} box="0 0 10 10"><path d="M.7.700h8.600v8.600H.7z" stroke="#222" strokeWidth="1.400" /><path d="M5.500 0H10v10H5.500z" fill="#222" /></Svg></IconButton>
      <Gap $w={4} />
      <Avatar $s={16}>D</Avatar>
      <IconButton $w={26} $h={20} aria-label="Chrome menu"><MdMoreVert size={14} /></IconButton>
    </ChromeBar>
    <Docs />
    <Downloads>
      {["s13638-017-0875-....pdf", "s13638-017-0875-6.pdf", "introduction.pdf"].map((f) => (
        <DownloadItem key={f}>
          <Pdf />
          <FileLink href={`#${f}`}>{f}</FileLink>
          <IconButton $w={16} $h={20} aria-label={`Options for ${f}`}><Line w={8} h={6} box="0 0 8 6" sw={1.500}><path d="M1 5l3-3 3 3" /></Line></IconButton>
        </DownloadItem>
      ))}
      <Grow />
      <ShowAll>Show all</ShowAll>
      <IconButton $w={18} $h={22} $c="#222" aria-label="Close downloads"><MdClose size={11} /></IconButton>
    </Downloads>
    <RemoteTaskbar>
      <RemoteApp $w={31} aria-label="Start"><Svg s={12} box="0 0 12 12" fill="#fff"><path d="M0 1.700l5-.7v4.700H0zM5.700.9L12 0v5.700H5.700zM0 6.300h5V11l-5-.7zM5.700 6.300H12V12l-6.300-.9z" /></Svg></RemoteApp>
      <RemoteSearch>
        <Line s={13} box="0 0 13 13" sw={1.300}><circle cx="8" cy="5" r="4" /><path d="M5 8l-4.500 4.500" /></Line>
        <input aria-label="Search" placeholder="Type here to search" />
        <Svg w={40} h={22} box="0 0 40 22">
          <circle cx="20" cy="6" r="5" fill="#f0a83a" /><path d="M10 22q0-6 7-7l-1-9h8v9q8 1 8 7z" fill="#f0a83a" />
          <circle cx="26" cy="14" r="4.500" fill="#bfe3ff" stroke="#2b67c5" strokeWidth="1.500" /><path d="M29 18l4 4" stroke="#2b67c5" strokeWidth="2" />
          <path d="M36 4v6M33 7h6" stroke="#c37bf0" strokeWidth="2" /><circle cx="7" cy="8" r="1.500" fill="#f2b31c" /><circle cx="2" cy="15" r="1.500" fill="#46c9a6" />
        </Svg>
      </RemoteSearch>
      <Gap $w={3} />
      <RemoteApp $bg="#b1602c" $w={35} aria-label="Edge"><EdgeLogo s={17} /></RemoteApp>
      <RemoteApp $bg="#b1602c" $w={35} aria-label="Explorer"><Folder s={16} /></RemoteApp>
      <RemoteApp aria-label="Mail"><Svg w={17} h={16} box="0 0 17 16"><path d="M0 6l8.500-6L17 6v10H0z" fill="#1575c9" /><path d="M2 5h13v7H2z" fill="#fff" /><path d="M0 6l8.500 6L17 6v10H0z" fill="#35b1f1" /></Svg></RemoteApp>
      <RemoteApp aria-label="Amazon"><Svg s={17} box="0 0 17 17"><rect width="17" height="17" fill="#fff" /><path d="M6 4.500q5-2 5 1v5.500M11 7q-5 0-5 2.300t5 0" stroke="#222" strokeWidth="1.800" /><path d="M4 13q4 2.500 9 0" stroke="#f39a1c" strokeWidth="1.200" /></Svg></RemoteApp>
      <RemoteApp aria-label="Dropbox"><Svg s={17} box="0 0 17 17"><rect width="17" height="17" fill="#0d62fe" /><path d="M5.500 4l3 2-3 2-3-2zM11.500 4l3 2-3 2-3-2zM5.500 8l3 2-3 2-3-2zM11.500 8l3 2-3 2-3-2zM8.500 11l2.500 1.500L8.500 14 6 12.500z" fill="#fff" /></Svg></RemoteApp>
      <RemoteApp aria-label="Chrome"><ChromeLogo s={17} /></RemoteApp>
      <RemoteApp aria-label="Sublime"><Svg w={9} h={17} box="0 0 10 17"><path d="M8 0L3 5l4 5-5 6" stroke="#fff" strokeWidth="2.600" /></Svg></RemoteApp>
      <RemoteApp aria-label="Sticky Notes"><Svg s={15} box="0 0 15 15"><path d="M0 0h15v9l-6 6H0z" fill="#fbd90d" /><path d="M7 8h8l-8 7z" fill="#5a4a0c" /></Svg></RemoteApp>
      <RemoteApp $bg="#735a57" $w={34} aria-label="Chrome profile">
        <Svg s={18} box="0 0 24 24"><circle cx="11" cy="11" r="10" fill="#fbc116" /><path d="M11 11L2 6a10.500 10.500 0 0118 0z" fill="#e33b2e" /><path d="M11 11L2 6a10.500 10.500 0 008 15z" fill="#229a48" /><circle cx="11" cy="11" r="4.500" fill="#3b7ded" stroke="#fff" /><circle cx="17" cy="17" r="7" fill="#5c6bc0" /><path d="M15 13.500v7h1.500q3-.5 3-3.500t-3-3.500z" stroke="#fff" strokeWidth="1.300" /></Svg>
      </RemoteApp>
      <RemoteApp aria-label="PowerPoint"><Svg s={17} box="0 0 17 17"><circle cx="9.500" cy="8.500" r="7.500" fill="#e0603c" /><path d="M9.500 1a7.500 7.500 0 017.500 7.500H9.500z" fill="#f4997e" /><rect y="4" width="9" height="9" rx="1" fill="#b93217" /><path d="M3 11V6h2q2 0 2 1.500T5 9H3" stroke="#fff" strokeWidth="1.200" /></Svg></RemoteApp>
      <RemoteApp aria-label="Word"><Svg s={16} box="0 0 16 16"><rect x="3" width="13" height="16" rx="1" fill="#3f8fe0" /><path d="M3 8h13v8H3z" fill="#1b4fa8" /><rect y="4" width="9" height="9" rx="1" fill="#17479d" /><path d="M2 6l1.200 5L4.500 7 6 11l1.200-5" stroke="#fff" /></Svg></RemoteApp>
      <RemoteApp aria-label="Snipping Tool"><Svg s={16} box="0 0 16 16"><ellipse cx="7" cy="5" rx="6.500" ry="4.500" fill="#f1eaea" /><path d="M2 3l8 5M12 2L5 8" stroke="#d6554b" strokeWidth="1.300" /><circle cx="9" cy="13" r="2" stroke="#2a84c8" strokeWidth="1.500" /><circle cx="13.500" cy="11" r="1.700" stroke="#2a84c8" strokeWidth="1.500" /></Svg></RemoteApp>
      <RemoteApp aria-label="Control"><Svg s={17} box="0 0 17 17"><circle cx="6.500" cy="6.500" r="4" stroke="#d7dde3" strokeWidth="2.500" /><circle cx="6.500" cy="6.500" r="5.800" stroke="#d7dde3" strokeWidth="1.300" strokeDasharray="2 1.600" /><circle cx="13.500" cy="13.500" r="2.300" stroke="#b7c3cd" strokeWidth="1.800" /></Svg></RemoteApp>
      <RemoteApp aria-label="Zoom"><ZoomLogo s={17} /></RemoteApp>
      <Grow />
      <RemoteApp aria-label="Help"><Svg s={17} box="0 0 17 17"><circle cx="8" cy="8" r="7.500" fill="#2a94d6" stroke="#fff" /><path d="M5.500 6q0-2.500 2.500-2.500T10.500 6q0 1.500-2.500 2.500v1.500M8 11.500v2" stroke="#fff" strokeWidth="1.800" /><circle cx="13.500" cy="13" r="3.500" fill="#f5b921" /></Svg></RemoteApp>
      <RemoteApp $w={31} aria-label="Weather"><Svg s={13} box="0 0 13 13"><circle cx="6.500" cy="6.500" r="6.300" fill="#f79a1b" /></Svg></RemoteApp>
      <Temperature>18°C</Temperature>
      <RemoteApp $w={18} aria-label="Hidden icons"><Line w={10} h={6} box="0 0 10 6" sw={1.200}><path d="M1 5l4-4 4 4" /></Line></RemoteApp>
      <RemoteApp $w={27} aria-label="Microphone"><Svg w={8} h={13} box="0 0 8 13"><rect x="2" width="4" height="9" rx="1" fill="#fff" /><path d="M.5 7v2q0 2 3.500 2t3.500-2V7M4 11v2" stroke="#fff" /></Svg></RemoteApp>
      <RemoteApp $w={20} aria-label="Cast"><Svg s={13} box="0 0 13 13"><path d="M1 3.500h8M1 3.500v8h8M4 1h8v8" stroke="#ddd" /><path d="M5 6h3M5 9h2" stroke="#ddd" /><circle cx="10" cy="10" r="2.500" fill="#2a7bd6" /></Svg></RemoteApp>
      <RemoteClock>9:41 AM<br />10/5/2022</RemoteClock>
      <RemoteApp $w={34} aria-label="Notifications"><Svg w={17} h={17} box="0 0 17 17"><path d="M0 1h12v10H6l-2 2v-2H0z" fill="#fff" /><path d="M2 4h8M2 6.500h8" stroke="#22343a" /><circle cx="12" cy="12" r="4.500" fill="#22343a" stroke="#aaa" /><path d="M11 10.500l1.200-1V15" stroke="#fff" /></Svg></RemoteApp>
    </RemoteTaskbar>
  </SharedScreen>
);

const Up = () => <Line w={13} h={9} box="0 0 13 9"><path d="M1 8l5.500-6L12 8" /></Line>;

const ZoomControls = () => (
  <MeetingBar>
    <Group>
      <MeetingItem $w={134}>
        <MeetingButton>
          <Svg s={36} box="0 0 36 36"><rect x="12" y="1" width="12" height="22" rx="6" fill="#a0a0a0" /><path d="M8.500 16q0 10 9.500 10t9.500-10M18 26v7M12 33.500h12" stroke="#a0a0a0" strokeWidth="2.500" /><path d="M0 35L34 0" stroke="#000" strokeWidth="4" /><path d="M1 35L35 0" stroke="#ff5a50" strokeWidth="2.500" /></Svg>
          Unmute
        </MeetingButton>
        <MeetingCaret aria-label="Audio options"><Up /></MeetingCaret>
      </MeetingItem>
      <MeetingItem $w={136}>
        <MeetingButton>
          <Svg s={36} box="0 0 36 36"><rect y="7" width="26" height="22" rx="4" fill="#a0a0a0" /><path d="M28 14l8-6v20l-8-6z" fill="#a0a0a0" /><path d="M0 35L34 0" stroke="#000" strokeWidth="4" /><path d="M1 35L35 0" stroke="#ff5a50" strokeWidth="2.500" /></Svg>
          Start Video
        </MeetingButton>
      </MeetingItem>
    </Group>
    <Group>
      <MeetingItem $w={136}>
        <MeetingButton>
          <Svg s={36} box="0 0 36 36"><g fill="#a0a0a0"><circle cx="12" cy="11" r="6" /><circle cx="26" cy="13" r="5" /><path d="M0 29q0-10 11-10t11 10q0 3-3 3H3q-3 0-3-3zM24 32q3-7-3-12 14-3 15 9 0 3-3 3z" /></g></Svg>
          Participants
        </MeetingButton>
        <Count>27</Count>
      </MeetingItem>
      <MeetingItem $w={144} $c="#23d959">
        <MeetingButton>
          <Svg s={36} box="0 0 36 36"><rect y="4" width="36" height="28" rx="5" fill="#23d959" /><path d="M18 25V13M12.500 17.500L18 12l5.500 5.500" stroke="#04240d" strokeWidth="3" /></Svg>
          Share Screen
        </MeetingButton>
      </MeetingItem>
      <MeetingItem $w={120}>
        <MeetingButton>
          <Svg s={36} box="0 0 36 36"><path d="M8 4h20q5 0 5 5v12q0 5-5 5H16l-7 6v-6H8q-5 0-5-5V9q0-5 5-5z" fill="#a0a0a0" /></Svg>
          Chat
        </MeetingButton>
        <MeetingCaret aria-label="Chat options"><Up /></MeetingCaret>
      </MeetingItem>
      <MeetingItem $w={120}>
        <MeetingButton>
          <Svg s={36} box="0 0 36 36"><circle cx="18" cy="18" r="14" fill="#a0a0a0" /><path d="M31 0v14M24 6h12" stroke="#000" strokeWidth="6" /><path d="M31 0v11M25.500 5.500h11" stroke="#a0a0a0" strokeWidth="2.500" /><circle cx="13" cy="16" r="2" fill="#000" /><circle cx="22" cy="16" r="2" fill="#000" /><path d="M12 21q6 7 12 0" stroke="#000" strokeWidth="2.500" /></Svg>
          Reactions
        </MeetingButton>
      </MeetingItem>
      <MeetingItem $w={120}>
        <MeetingButton>
          <Svg s={36} box="-3.500 -3.500 31 31"><path fill="#a0a0a0" fillRule="evenodd" d="M9 0h6l1 3.500 1.500.9L21 3.500l3 5-2.500 2.600v1.800L24 15.500l-3 5-3.500-.9-1.500.9L15 24H9l-1-3.500-1.500-.9-3.500.9-3-5 2.500-2.600v-1.800L0 8.500l3-5 3.500.9L8 3.500zM12 7a5 5 0 100 10 5 5 0 000-10z" stroke="#a0a0a0" strokeLinejoin="round" /></Svg>
          Settings
        </MeetingButton>
      </MeetingItem>
      <MeetingItem $w={120}>
        <MeetingButton>
          <Svg s={36} box="0 0 36 36" fill="#a0a0a0"><circle cx="6" cy="18" r="3" /><circle cx="18" cy="18" r="3" /><circle cx="30" cy="18" r="3" /></Svg>
          More
        </MeetingButton>
      </MeetingItem>
    </Group>
    <Leave>Leave</Leave>
  </MeetingBar>
);

const apps: { name: string; icon: React.ReactNode; on?: boolean; active?: boolean; unread?: string }[] = [
  { name: "Start", icon: <Svg s={36} box="0 0 36 36"><defs><linearGradient id="win" x2="1" y2="1"><stop stopColor="#8fe3ff" /><stop offset="1" stopColor="#0a92f5" /></linearGradient></defs><path fill="url(#win)" d="M0 1.500Q0 0 1.500 0H17v17H0zM18.500 0h16Q36 0 36 1.500V17H18.500zM0 18.500h17V36H1.500Q0 36 0 34.500zM18.500 18.500H36v16q0 1.500-1.500 1.500h-16z" /></Svg> },
  { name: "Search", icon: <Svg s={36} box="0 0 36 36"><circle cx="20" cy="14" r="13" fill="#20232c" stroke="#f0f0f0" strokeWidth="3" /><path d="M11 24L3 33" stroke="#d8d8d8" strokeWidth="4" strokeLinecap="round" /></Svg> },
  { name: "Task View", icon: <Svg s={36} box="0 0 36 36"><rect x="0" y="10" width="26" height="26" rx="2" fill="#6c6c6c" /><rect x="9" y="0" width="27" height="26" rx="2" fill="#f3f3f3" /><path d="M9 10h17v16H9z" fill="#c2c2c2" /></Svg> },
  {
    name: "Firefox", active: true, icon: (
      <Svg s={36} box="0 0 36 36">
        <defs><linearGradient id="fox" x1="1" x2=".3" y2="1"><stop stopColor="#fff44f" /><stop offset=".4" stopColor="#ff9a1f" /><stop offset=".75" stopColor="#ff3b4e" /><stop offset="1" stopColor="#e31587" /></linearGradient></defs>
        <path d="M18 36C8 36 0 29 0 19 0 13 3 9 5 6l1 5 2-1-1-5 6 6h6q-1-7 4-11 1 4 5 7l2-1q6 6 6 14C36 29 28 36 18 36z" fill="url(#fox)" />
        <circle cx="18" cy="19" r="8.500" fill="#6b3be0" />
        <path d="M6 11q4-2 8 1l6 1q-2 3-6 3-3 2-2 6-5-3-6-11z" fill="#ff9a1f" />
      </Svg>
    ),
  },
  { name: "File Explorer", icon: <Folder /> },
  { name: "Edge", icon: <EdgeLogo /> },
  {
    name: "WhatsApp", on: true, unread: "32", icon: (
      <Svg s={36} box="0 0 36 36"><path d="M0 36l2.500-9A17.500 17.500 0 1110 34z" fill="#fff" /><path d="M4 32l2-6.500A14 14 0 1111 30z" fill="#3fc351" /><path d="M12 9q-3 2-2 6 3 10 13 12 3 0 4-4l-5-3-2 2q-5-2-6-6l2-2-2-5z" fill="#fff" /></Svg>
    ),
  },
  { name: "Microsoft Store", icon: <Svg s={36} box="0 0 36 36"><path d="M9 6V1h18v5" stroke="#3bb4e8" strokeWidth="2" /><path d="M0 5h36v27q0 4-4 4H4q-4 0-4-4z" fill="#f4f4f4" /><path d="M10 12h7v7h-7z" fill="#f25022" /><path d="M19 12h7v7h-7z" fill="#7fba00" /><path d="M10 21h7v7h-7z" fill="#00a4ef" /><path d="M19 21h7v7h-7z" fill="#ffb900" /></Svg> },
  { name: "Word", on: true, icon: <WordLogo w={32} h={36} /> },
  { name: "Settings", on: true, icon: <Gear s={36} c="#8d9399" inner={<circle cx="12" cy="12" r="5" fill="#1669b8" stroke="#f0f0f0" strokeWidth="1.600" />} /> },
];

const WindowsTaskbar = () => (
  <Taskbar>
    <Wallpaper viewBox="0 0 1920 72" preserveAspectRatio="none" aria-hidden="true">
      <defs>
        <linearGradient id="wall">
          <stop stopColor="#05090a" /><stop offset=".2" stopColor="#060a12" /><stop offset=".33" stopColor="#060b2c" />
          <stop offset=".37" stopColor="#05091c" /><stop offset=".55" stopColor="#05091f" /><stop offset=".64" stopColor="#030a4e" />
          <stop offset=".7" stopColor="#041070" /><stop offset=".74" stopColor="#050a18" /><stop offset="1" stopColor="#04060c" />
        </linearGradient>
      </defs>
      <rect width="1920" height="72" fill="url(#wall)" />
      <path d="M376 34q40-24 60-28l-8 10-52 24zM88 28l50-20 4 2-50 20z" fill="#050b28" />
      <path d="M300 60q90-10 230-50l8 2q-90 40-230 54z" fill="#020406" />
      <path d="M690 4h650l6 28q-100-4-200-2L700 34z" fill="#03060c" />
      <path d="M1340 4h32l40 68h-62z" fill="#051090" />
      <path d="M1372 4h160l40 68h-160z" fill="#04070a" />
      <path d="M1535 4h300l-40 24q-180 16-250-6z" fill="#040a2a" />
      <path d="M355 0h1388q0 4-8 4H363q-8 0-8-4z" fill="#1b272e" />
      <path d="M371 0h36v4h-36z" fill="#b0785a" /><path d="M407 0h38v4h-38z" fill="#1a4450" /><path d="M508 0h7l-3 4h-5z" fill="#dfe7ea" />
      <rect x="236" y="33" width="18" height="5" fill="#0a1c34" /><rect x="253" y="24" width="3" height="3" fill="#4fae4f" />
    </Wallpaper>
    <span />
    <Apps>
      {apps.map((a) => (
        <App_ key={a.name} $active={a.active} aria-label={a.name}>
          {a.icon}
          <Running $on={a.on} $active={a.active} />
          {a.unread && <Unread>{a.unread}</Unread>}
        </App_>
      ))}
    </Apps>
    <Tray>
      <IconButton $w={48} aria-label="Show hidden icons"><Line w={18} h={11} box="0 0 18 11" sw={1.500}><path d="M1 10l8-8.500L17 10" /></Line></IconButton>
      <IconButton $w={48} aria-label="OneDrive"><Svg w={24} h={16} box="0 0 24 16"><path d="M5 6a6.500 6.500 0 0113 0l-6 6z" fill="#8a8a8a" /><path d="M4 15q-4-1-4-4.500T5 6q4 0 7 3l7-3q5 0 5 5 0 4-4 4z" fill="#f4f4f4" /></Svg></IconButton>
      <IconButton $w={48} aria-label="Microphone"><Svg w={16} h={25} box="0 0 16 25"><rect x="3" width="10" height="18" rx="1.500" fill="#fff" /><path d="M1 13v4q0 4 7 4t7-4v-4M8 21v3M4.500 24h7" stroke="#fff" strokeWidth="1.300" /></Svg></IconButton>
      <IconButton $w={48} aria-label="Battery"><Svg w={24} h={20} box="0 0 24 20"><path d="M1 3h20v12H1zM22 6v5" stroke="#fff" strokeWidth="1.500" /><path d="M3 5h6v8H3z" fill="#fff" /><circle cx="17" cy="13" r="6.500" fill="#118a1f" /><path d="M17 9q-5 4 0 8 5-4 0-8zM17 11v7" stroke="#fff" strokeWidth="1.200" /></Svg></IconButton>
      <IconButton $w={48} aria-label="Wi-Fi"><Line s={20} box="0 0 20 20" sw={1.300}><path d="M1 19Q1 5 19 1M6 19Q6 9 19 6M11 19q0-6 8-8" /><circle cx="17" cy="17" r="2" fill="currentColor" stroke="none" /></Line></IconButton>
      <IconButton $w={48} aria-label="Volume"><Line w={22} h={20} box="0 0 22 20" sw={1.300}><path d="M1 7h3l5-5v16l-5-5H1zM12 8q2 2 0 4M15 5q4 5 0 10" /><path d="M18 2q6 8 0 16" stroke="#888" /></Line></IconButton>
      <Clock>9:41 AM<br />10/5/2022</Clock>
      <Notice aria-label="Notifications">
        <Svg w={24} h={24}><path d="M0 0h24v20H12l-4 4v-4H0z" fill="#fff" /><path d="M4 6h15M4 10h15M4 14h8" stroke="#111" strokeWidth="1.500" /></Svg>
        <NoticeCount>21</NoticeCount>
      </Notice>
      <PeekLine />
    </Tray>
  </Taskbar>
);

export default function App() {
  return (
    <Desktop>
      <GlobalStyle />
      <FirefoxChrome />
      <Stage>
        <TopRow>
          <Badges>
            <Badge>
              <Svg w={19} h={21} box="0 0 19 21"><path d="M9.500 0q4 3 9.500 3.500 0 14-9.500 17.500Q0 17.500 0 3.500 5.500 3 9.500 0z" fill="#25e25c" /><path d="M5 10.500l3 3 6-6" stroke="#0d3a1a" strokeWidth="2" /></Svg>
            </Badge>
            <RecBadge><RecDot />REC</RecBadge>
          </Badges>
          <Tiles>
            {people.map((p) => (
              <Tile key={p.name}>
                <TileName>{p.name}</TileName>
                <TileLabel>{p.muted && <MutedMic />}{p.name}</TileLabel>
              </Tile>
            ))}
          </Tiles>
          <StripSide>
            <NextButton aria-label="Next participants"><Line w={16} h={26} box="0 0 16 26" sw={3.500}><path d="M2 2l11 11L2 24" /></Line></NextButton>
            <ViewButton><Svg s={16} box="0 0 16 16" fill="currentColor"><path d="M0 0h4.500v4H0zM5.700 0h4.600v4H5.700zM11.500 0H16v4h-4.500zM0 5.500h16V15q0 1-1 1H1q-1 0-1-1z" /></Svg>View</ViewButton>
          </StripSide>
        </TopRow>
        <RemoteDesktop />
      </Stage>
      <ZoomControls />
      <WindowsTaskbar />
    </Desktop>
  );
}
